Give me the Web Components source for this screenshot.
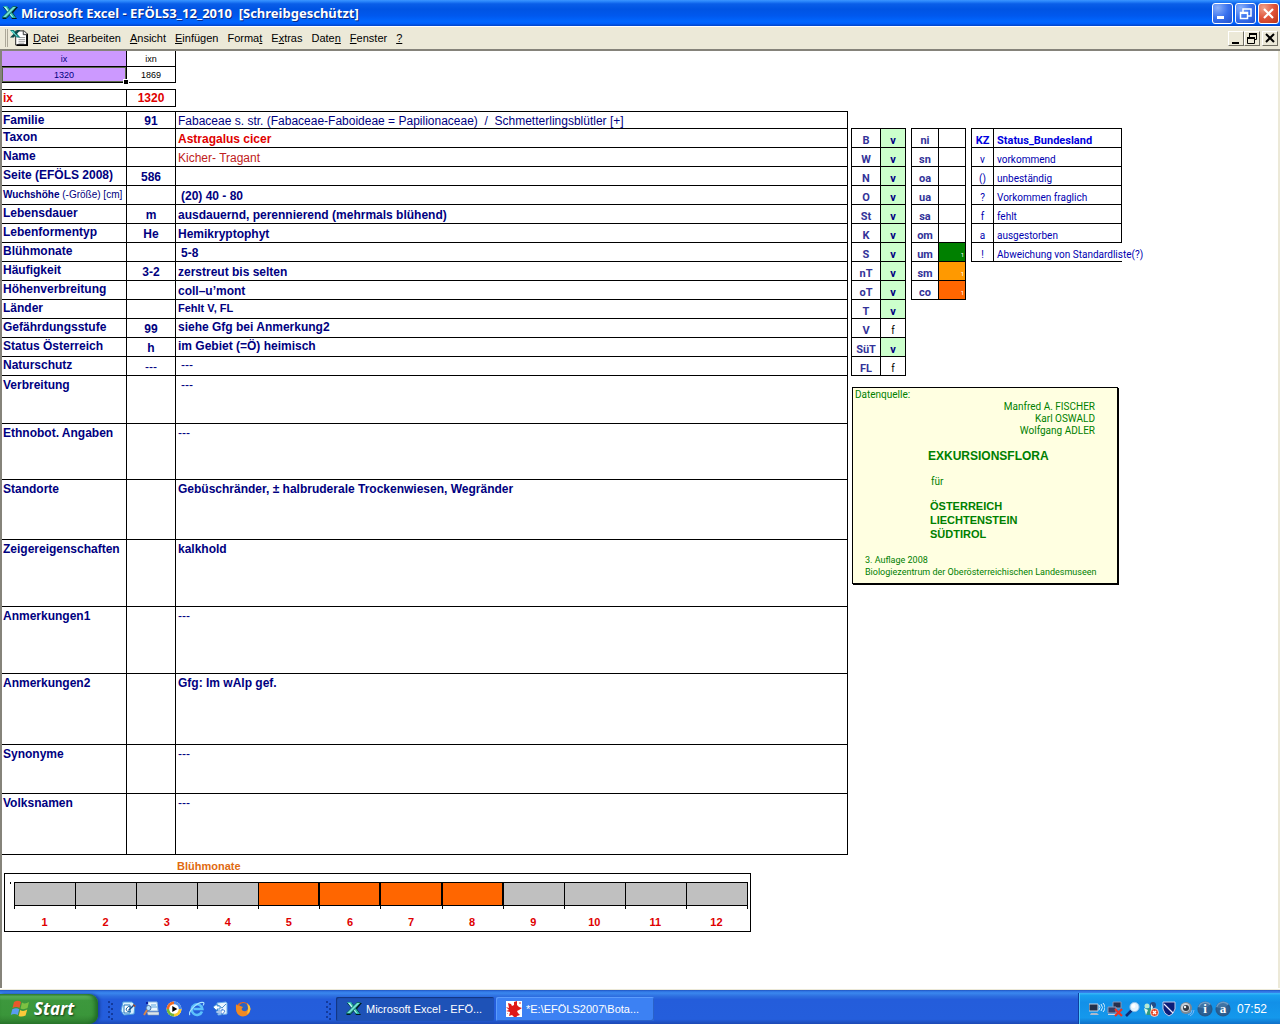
<!DOCTYPE html>
<html lang="de">
<head>
<meta charset="utf-8">
<title>Microsoft Excel - EFÖLS3_12_2010 [Schreibgeschützt]</title>
<style>
html, body { margin: 0; height: 100%; background: #fff; }
body { font: 11px/14px "Liberation Sans", Arial, sans-serif; color: #000; }
</style>
</head>
<body>
<excel-window>
  <title-bar slot="title">Microsoft Excel - EFÖLS3_12_2010&nbsp; [Schreibgeschützt]</title-bar>
  <menu-bar slot="menu"></menu-bar>
  <index-cells slot="main"></index-cells>
  <record-table slot="main"></record-table>
  <month-chart slot="main" from="5" to="8">Blühmonate</month-chart>
  <region-tables slot="side"></region-tables>
  <source-note slot="side"></source-note>
  <task-bar slot="taskbar"></task-bar>
</excel-window>

<script>
const define = (tag, html) => customElements.define(tag, class extends HTMLElement {
  connectedCallback() {
    if (this.shadowRoot) return;
    const t = document.createElement('template');
    t.innerHTML = typeof html === 'function' ? html(this) : html;
    this.attachShadow({ mode: 'open' }).append(t.content.cloneNode(true));
  }
});

const svg = (body, w = 16, h = 16, vb = `0 0 ${w} ${h}`) =>
  `<svg width="${w}" height="${h}" viewBox="${vb}" aria-hidden="true">${body}</svg>`;

const icons = {
  excel: `<path d="M1 2h5l3 4 3-4h4l-5 6 4 6h-5L8 10l-4 4H0l6-6z" fill="#021c20"/><path d="M1 1h4l9 12h-4z" fill="#27b5a8"/><path d="M2 2h2l7 10h-1z" fill="#bff7ee"/><path d="M11 1h4L5 13H0v-1z" fill="#0d6b67"/><path d="M11 2h3L4 12H1z" fill="#6fe0d2"/>`,
  sheet: `<path d="M6 2h9l3 3v12H6z" fill="#fff" stroke="#222"/><path d="M18 5v12H7" stroke="#000" fill="none" stroke-width="2"/><path d="M14 2v4h4" fill="#ddd" stroke="#333"/><path d="M9 9h7M9 11h7M9 13h7M9 15h6" stroke="#999"/><path d="M0 1h4l7 8H7z" fill="#12807a"/><path d="M8 1h3L4 9H0z" fill="#0a4a4a"/><path d="M1 2h2l5 6H7z" fill="#6ee8dc"/>`,
  flag: `<path d="M3 3q4-2.500 7 0L8.500 9q-3-2-7 0z" fill="#e8582c"/><path d="M11 3.500q3 2 7-.5L16.500 9q-4 2-7 .5z" fill="#7cc142"/><path d="M1.300 10.200q4-2 7 0L6.800 16q-3.500-2-7 0z" fill="#5a9cf0"/><path d="M9.200 11q3 2 7-.5l-1.600 6q-4 2-7 .4z" fill="#fbc93a"/>`,
  desktop: `<path d="M3 1h9l3 3-1 9-10 1-3-4z" fill="#d9f1ff" stroke="#4b9ddc"/><path d="M4 4h6v8H4z" fill="#fff" stroke="#2379bd"/><path d="M6 8q2-4 5-2M6 8q1 4 5 2" stroke="#1667a8" fill="none"/><path d="M8 9l6-6 1 1-6 6z" fill="#1a4c8a"/><path d="M13 3l3 2-2 1z" fill="#b5431c"/>`,
  find: `<path d="M5 1h9l1 9H5z" fill="#eef8ff" stroke="#8fb9dd"/><path d="M8 4h5M8 6h6" stroke="#58a3df"/><path d="M4 11h12v3H5z" fill="#dbe4ec" stroke="#8097b0" stroke-width=".6"/><circle cx="5.500" cy="7" r="2.500" fill="#b5e1ff" stroke="#4972aa"/><path d="M4 9l-3 5" stroke="#d3834b" stroke-width="2"/><path d="M3 1h2v2H3z" fill="#0a1fa0"/>`,
  media: `<circle cx="8" cy="8" r="7.500" fill="#f7f7f7"/><path d="M8 .5A7.500 7.500 0 0 0 .5 8H8z" fill="#f06a22"/><path d="M8 .5A7.500 7.500 0 0 1 15.500 8H8z" fill="#4f8de8"/><path d="M.5 8A7.500 7.500 0 0 0 8 15.500V8z" fill="#74b838"/><path d="M15.500 8A7.500 7.500 0 0 1 8 15.500V8z" fill="#fac92c"/><circle cx="8" cy="8" r="4.800" fill="#fff"/><path d="M6.300 5v6l5-3z" fill="#000"/>`,
  ie: `<path d="M13 10.500A5.300 5.300 0 1 1 13.300 8H4.500" fill="none" stroke="#5cc0fb" stroke-width="2.600"/><path d="M1 14C-2 11 9 0 14.500 1.500q1 1-.5 3" fill="none" stroke="#a8e2ff" stroke-width="1.200"/>`,
  mail: `<path d="M5 2l9-1 1 1v11l-9 1z" fill="#eaf6ff" stroke="#6caee6"/><path d="M6 4l4 3 4-4" stroke="#4f92d0" fill="none"/><path d="M1 6l4-3v2h3v3H5v2z" fill="#fff" stroke="#2a7dd0" stroke-width=".8"/><path d="M13 10l-3 4v-2H4v-2h6V8z" fill="#fff" stroke="#2a6fd0" stroke-width=".8"/>`,
  firefox: `<circle cx="8" cy="8" r="7" fill="#e8641b"/><circle cx="8.500" cy="6.500" r="4.500" fill="#2b62c4"/><path d="M1 3q1 2 3 1.500L8 6 6.500 8q1 3 4.500 2 3-1 2-5 2 1 2.500 3-.5 7-7.500 7.500Q0 15 1 3z" fill="#f08a24"/><path d="M12 2q3 2 3.500 6-1 4-3.500 5 2-5 0-11z" fill="#fbc63c"/>`,
  splat: `<path d="M0 0h16v16H0z" fill="#fff"/><path d="M2 2l3 1 1 2 2-1V1l3-1v4l2 2 3 1-3 2-2 1 1 2 2 2-3 1-1 2-2-1-2-2-3 1 1-4-4-1 3-1-3-3 3 1z" fill="#e01818"/><path d="M13 1h2v2h-2zM1 12h1v1H1z" fill="#ef9a9a"/>`,
  net: `<path d="M0 3h9v7H0z" fill="#23304a" stroke="#c4d2e4"/><path d="M2 12h6l2 2H1z" fill="#aeb9cb"/><path d="M10 4q2 2 0 5M12 3q3 3.500 0 7M14 2q4 4.500 0 9" fill="none" stroke="#d4eeff"/>`,
  netx: `<path d="M6 1h8v6H6z" fill="#25304f" stroke="#8393b5"/><path d="M1 6h8v6H1z" fill="#33406a" stroke="#8c9bbd"/><path d="M1 13h8v1H1z" fill="#cbd4e4"/><path d="M8 8l7 7M15 8l-7 7" stroke="#ea3323" stroke-width="2.200"/>`,
  lens: `<path d="M7 9l-6 6" stroke="#0c2c78" stroke-width="2.600"/><circle cx="9.500" cy="6" r="4.600" fill="#e4f4ff" stroke="#8fc1ea"/><circle cx="8.500" cy="5" r="2" fill="#fff"/>`,
  users: `<circle cx="10" cy="4" r="3" fill="#234d88"/><circle cx="4" cy="5" r="2.500" fill="#b8e9d2"/><path d="M1 8l6-1 6 1-2 6H3z" fill="#2f9a82"/><path d="M1 7l4 2-2 5zM8 3l2 3-2 6z" fill="#dff8ee"/><circle cx="11.500" cy="11.500" r="4" fill="#e4482a" stroke="#fff" stroke-width=".7"/><path d="M10 10l3 3M13 10l-3 3" stroke="#fff" stroke-width="1.400"/>`,
  shield: `<path d="M2 1h12v7q-1 5-6 7-5-2-6-7z" fill="#0b1d78" stroke="#c3cbe8"/><path d="M3 3l9 9" stroke="#eef" stroke-width="1.200"/>`,
  sound: `<circle cx="7" cy="7" r="6" fill="#7c8894"/><circle cx="6.500" cy="6.500" r="4.500" fill="#c8d0d8"/><circle cx="7" cy="7" r="3" fill="#313a44"/><circle cx="6" cy="6" r="1.200" fill="#f2f5f8"/><path d="M9 14q4-1 4-5M11 15q4-2 4-6" fill="none" stroke="#7db9f5"/>`,
  disc: `<circle cx="8" cy="8" r="7.600" fill="#275a8c"/><path d="M1 6A7.600 7.600 0 0 1 14 3L8 8z" fill="#6d9cc4"/><circle cx="8" cy="8" r="6" fill="#2f6496" opacity=".7"/>`
};

define('excel-window', `
<style>
:host { display: flex; flex-direction: column; min-height: 100vh; background: #fff; }
.sheet { flex: 1; display: grid; grid-template-columns: minmax(0, 1fr) 427px; column-gap: 3px; box-sizing: border-box;
  border-left: 2px solid #85837a; border-right: 2px solid #ece9d8; }
.side { display: flex; flex-direction: column; gap: 11px; padding-top: 77px; }
.edge { height: 2px; background: #ece9d8; border-top: 1px solid #fff; box-sizing: border-box; }
</style>
<slot name="title"></slot>
<slot name="menu"></slot>
<main class="sheet">
  <div class="main"><slot name="main"></slot></div>
  <div class="side"><slot name="side"></slot></div>
</main>
<div class="edge"></div>
<slot name="taskbar"></slot>`);

define('title-bar', `
<style>
:host { display: flex; align-items: center; gap: 3px; height: 26px; padding: 0 1px 0 2px; color: #fff;
  font: bold 13px/18px "Noto Sans", sans-serif; text-shadow: 1px 1px 0 #0a2a88;
  background: linear-gradient(#3d95ff 0, #2a86fb 5%, #0a5ee8 15%, #0054e3 35%, #0058ee 60%, #0066ff 82%, #0060fc 90%, #0144c8 100%); }
h1 { flex: 1; margin: 0; font: inherit; white-space: pre; }
.btns { display: flex; gap: 2px; }
button { width: 21px; height: 21px; padding: 0; border: 1px solid #fff; border-radius: 3px; display: grid; place-items: center;
  background: radial-gradient(circle at 25% 20%, #8bb0fa, #3a72ee 50%, #2050cc); }
button.close { background: radial-gradient(circle at 25% 20%, #f0a088, #e0533a 50%, #b83418); }
svg { display: block; }
</style>
${svg(icons.excel)}
<h1><slot></slot></h1>
<div class="btns">
<button aria-label="Minimieren">${svg('<path d="M3 11h7v3H3z" fill="#fff"/>', 17, 17)}</button>
<button aria-label="Wiederherstellen">${svg('<path d="M6 7V4h8v7h-3" fill="none" stroke="#fff" stroke-width="1.500"/><path d="M3.500 7.500h7v6h-7z" fill="none" stroke="#fff" stroke-width="1.500"/><path d="M3 7h8v2H3z" fill="#fff"/>', 17, 17)}</button>
<button class="close" aria-label="Schließen">${svg('<path d="M4 4l9 9M13 4l-9 9" stroke="#fff" stroke-width="2.200"/>', 17, 17)}</button>
</div>`);

define('menu-bar', () => {
  const items = ['<u>D</u>atei', '<u>B</u>earbeiten', '<u>A</u>nsicht', '<u>E</u>infügen', 'Forma<u>t</u>', 'E<u>x</u>tras', 'Date<u>n</u>', '<u>F</u>enster', '<u>?</u>'];
  return `
<style>
:host { display: flex; align-items: center; height: 25px; box-sizing: border-box; padding: 0 2px 0 5px;
  background: #ece9d8; border-top: 1px solid #fff; border-bottom: 2px solid #85837a; }
.grip { width: 1px; height: 18px; border-left: 1px solid #aca899; border-right: 1px solid #aca899; margin-right: 2px; }
nav { flex: 1; display: flex; gap: 9px; margin-left: 5px; }
button { font: 11px/14px "Liberation Sans", Arial, sans-serif; color: #000; padding: 0; border: 0; background: none; }
.ctl { display: flex; }
.ctl button { width: 16px; height: 15px; border: 1px solid; border-color: #fff #716f64 #716f64 #fff; background: #ece9d8; }
.ctl button:last-child { margin-left: 2px; }
svg { display: block; }
</style>
<span class="grip"></span>${svg(icons.sheet, 18, 18, '0 0 19 19')}
<nav>${items.map(i => `<button>${i}</button>`).join('')}</nav>
<div class="ctl">
<button aria-label="Fenster minimieren">${svg('<path d="M3 10h7v2H3z"/>', 14, 13)}</button>
<button aria-label="Fenster wiederherstellen">${svg('<path d="M4.500 5V2.500h7v5H9M2.500 6.500h7v5h-7z" fill="none" stroke="#000"/><path d="M4 1h8v2H4zM2 5h8v2H2z"/>', 14, 13)}</button>
<button aria-label="Fenster schließen">${svg('<path d="M3 2l8 8M11 2l-8 8" stroke="#000" stroke-width="2"/>', 14, 13)}</button>
</div>`;
});

define('index-cells', `
<style>
:host { display: block; }
table { border-collapse: separate; border-spacing: 0; width: 174px; table-layout: fixed; }
th, td { box-sizing: border-box; padding: 0; border: solid #000; border-width: 0 1px 1px 0; text-align: center; }
.c { width: 125px; }
.keys { font: 9px/14px "Liberation Sans", Arial, sans-serif; }
.keys th { font-weight: normal; }
.keys tr { height: 16px; }
.keys .k { background: #c9f; color: #000080; }
.keys td.k { position: relative; box-shadow: inset 0 0 0 1px #5c6a4c; }
.keys td.k::after { content: ""; position: absolute; right: -3px; bottom: -3px; width: 4px; height: 4px; background: #000; border: 1px solid #fff; }
.id { margin-top: 6px; border-top: 1px solid #000; color: #e00000; font: bold 12px/16px "Liberation Sans", Arial, sans-serif; }
.id th { text-align: left; padding-left: 1px; height: 17px; }
</style>
<table class="keys">
<tr><th class="c k">ix</th><th>ixn</th></tr>
<tr><td class="k">1320</td><td>1869</td></tr>
</table>
<table class="id"><tr><th class="c">ix</th><td>1320</td></tr></table>`);

define('record-table', () => {
  // label, code, value, row height, classes of the value cell
  const rows = [
    ['Familie', '91', 'Fabaceae s. str. (Fabaceae-Faboideae = Papilionaceae)&nbsp; /&nbsp; Schmetterlingsblütler [+]', 17, 'plain'],
    ['Taxon', '', 'Astragalus cicer', 19, 'taxon'],
    ['Name', '', 'Kicher- Tragant', 19, 'name'],
    ['Seite (EFÖLS 2008)', '586', '', 19, ''],
    ['<small><b>Wuchshöhe</b> (-Größe) [cm]</small>', '', '(20) 40 - 80', 19, 'indent'],
    ['Lebensdauer', 'm', 'ausdauernd, perennierend (mehrmals blühend)', 19, ''],
    ['Lebenformentyp', 'He', 'Hemikryptophyt', 19, ''],
    ['Blühmonate', '', '5-8', 19, 'indent'],
    ['Häufigkeit', '3-2', 'zerstreut bis selten', 19, ''],
    ['Höhenverbreitung', '', 'coll–u’mont', 19, ''],
    ['Länder', '', 'Fehlt V, FL', 19, 'up small'],
    ['Gefährdungsstufe', '99', 'siehe Gfg bei Anmerkung2', 19, 'up'],
    ['Status Österreich', 'h', 'im Gebiet (=Ö) heimisch', 19, 'up'],
    ['Naturschutz', '---', '---', 19, 'indent up'],
    ['Verbreitung', '', '---', 48, 'indent mid'],
    ['Ethnobot. Angaben', '', '---', 56, 'mid'],
    ['Standorte', '', 'Gebüschränder, ± halbruderale Trockenwiesen, Wegränder', 60, 'mid'],
    ['Zeigereigenschaften', '', 'kalkhold', 67, 'mid'],
    ['Anmerkungen1', '', '---', 67, 'mid'],
    ['Anmerkungen2', '', 'Gfg: Im wAlp gef.', 71, 'mid'],
    ['Synonyme', '', '---', 49, 'mid'],
    ['Volksnamen', '', '---', 61, 'mid']
  ];
  const dash = v => v === '---' ? ' plain' : '';
  return `
<style>
:host { display: block; margin-top: 4px; color: #000080; }
table { width: 100%; border-collapse: separate; border-spacing: 0; table-layout: fixed; border-top: 1px solid #000;
  font: bold 12px/15px "Liberation Sans", Arial, sans-serif; }
th, td { box-sizing: border-box; padding: 3px 0 0 2px; border: solid #000; border-width: 0 1px 1px 0; vertical-align: top; text-align: left; white-space: nowrap; }
th { padding: 1px 0 0 1px; width: 125px; }
.code { width: 49px; text-align: center; padding-left: 0; }
.up { padding-top: 1px; }
tr:first-child td { padding-top: 2px; line-height: 14px; }
tr.tall th, .mid { padding-top: 2px; }
.indent { padding-left: 5px; }
.plain, .name { font-weight: normal; }
.taxon { color: #e00000; }
.name { color: #c02020; }
.small { font-size: 11px; }
small { font: 10px/15px "Liberation Sans", Arial, sans-serif; }
</style>
<table>${rows.map(([l, c, v, h, k]) =>
    `<tr style="height:${h}px"${h > 19 ? ' class="tall"' : ''}><th scope="row">${l}</th><td class="code${dash(c)}">${c}</td><td class="${k}${dash(v)}">${v}</td></tr>`).join('')}</table>`;
});

define('month-chart', el => {
  const from = +el.getAttribute('from'), to = +el.getAttribute('to');
  const months = Array.from({ length: 12 }, (_, i) => i + 1);
  return `
<style>
:host { display: block; margin: 4px 97px 0 2px; font: bold 11px/14px "Liberation Sans", Arial, sans-serif; }
h2 { margin: 0 0 0 173px; font: inherit; color: #e06a10; }
.box { display: flex; border: 1px solid #000; height: 59px; padding: 8px 2px 0 5px; box-sizing: border-box; }
.axis { width: 4px; height: 22px; box-sizing: border-box; border-left: 1px solid transparent; border-image: linear-gradient(#000 3px, transparent 3px) 1; }
ol { flex: 1; list-style: none; margin: 0; padding: 0; display: grid; grid-template-columns: repeat(12, 1fr); border-right: 1px solid #000; height: 27px; }
li { color: #e00000; text-align: center; }
s { display: block; height: 27px; border-left: 1px solid #000; }
i { display: block; height: 22px; background: #c0c0c0; border: solid #000; border-width: 1px 0; }
.on i { background: #f60; border-right-width: 1px; }
b { display: block; padding-top: 6px; }
</style>
<h2><slot></slot></h2>
<div class="box"><span class="axis"></span><ol>${months.map(m => `<li class="${m >= from && m <= to ? 'on' : ''}"><s><i></i></s><b>${m}</b></li>`).join('')}</ol></div>`;
});

define('region-tables', () => {
  const laender = ['B', 'W', 'N', 'O', 'St', 'K', 'S', 'nT', 'oT', 'T', 'V', 'SüT', 'FL'];
  const stufen = [['ni'], ['sn'], ['oa'], ['ua'], ['sa'], ['om'], ['um', '#008000'], ['sm', '#ff9900'], ['co', '#ff6600']];
  const legend = [['v', 'vorkommend'], ['()', 'unbeständig'], ['?', 'Vorkommen fraglich'], ['f', 'fehlt'], ['a', 'ausgestorben'], ['!', 'Abweichung von Standardliste(?)']];
  return `
<style>
:host { display: flex; align-items: flex-start; gap: 5px; font: 10px/13px Roboto, "Liberation Sans", sans-serif; color: #0000b0; }
table { border-collapse: separate; border-spacing: 0; table-layout: fixed; border: solid #000; border-width: 1px 0 0 1px; }
th, td { box-sizing: border-box; height: 19px; padding: 5px 0 0; border: solid #000; border-width: 0 1px 1px 0; text-align: center; white-space: nowrap; }
th, .v { font: bold 11px/13px Roboto, "Liberation Sans", sans-serif; }
.land { width: 55px; } .stufe { width: 55px; } .legend { width: 151px; }
.land th, .stufe th { color: #333399; }
.land th { width: 29px; } .stufe th { width: 27px; }
.v { background: #cfc; color: #000080; }
.f { color: #000; }
.legend th:first-child { width: 22px; }
.legend thead { color: #0000e0; }
.legend th + th, .legend td + td { text-align: left; padding-left: 3px; }
.legend tbody tr:last-child td + td { border-right: 0; }
.mark { text-align: right; color: #fff; font-size: 6px; padding-right: 1px; }
</style>
<table class="land">${laender.map(l => {
    const s = l === 'V' || l === 'FL' ? 'f' : 'v';
    return `<tr><th scope="row">${l}</th><td class="${s}">${s}</td></tr>`;
  }).join('')}</table>
<table class="stufe">${stufen.map(([s, c]) => `<tr><th scope="row">${s}</th><td class="mark"${c ? ` style="background:${c}"` : ''}>${c ? '1' : ''}</td></tr>`).join('')}</table>
<table class="legend"><thead><tr><th>KZ</th><th>Status_Bundesland</th></tr></thead>
<tbody>${legend.map(([k, t]) => `<tr><td>${k}</td><td>${t}</td></tr>`).join('')}</tbody></table>`;
});

define('source-note', `
<style>
:host { display: flex; flex-direction: column; box-sizing: border-box; width: 266px; height: 197px; margin-left: 1px; padding: 1px 2px 5px; color: #008000;
  background: #ffffe1; border: 1px solid #000; box-shadow: 1px 1px 0 #000; font: 10px/12px Roboto, "Liberation Sans", sans-serif; white-space: nowrap; }
p { margin: 0; }
.authors { text-align: right; padding-right: 20px; }
h2 { margin: 11px 0 0 73px; font: bold 12px/16px "Liberation Sans", Arial, sans-serif; }
.for { margin: 12px 0 0 76px; }
h3 { margin: 11px 0 0 75px; font: bold 11px/14px "Liberation Sans", Arial, sans-serif; }
.foot { margin: auto 0 0 10px; font-size: 9px; }
</style>
<p>Datenquelle:</p>
<p class="authors">Manfred A. FISCHER<br>Karl OSWALD<br>Wolfgang ADLER</p>
<h2>EXKURSIONSFLORA</h2>
<p class="for">für</p>
<h3>ÖSTERREICH<br>LIECHTENSTEIN<br>SÜDTIROL</h3>
<p class="foot">3. Auflage 2008<br>Biologiezentrum der Oberösterreichischen Landesmuseen</p>`);

define('task-bar', () => {
  const quick = [['desktop', 'Desktop anzeigen'], ['find', 'Suchen'], ['media', 'Media Player'], ['ie', 'Internet Explorer'], ['mail', 'Outlook Express'], ['firefox', 'Firefox']];
  const disc = ch => `<span class="disc">${svg(icons.disc)}<em>${ch}</em></span>`;
  return `
<style>
:host { display: flex; height: 34px; color: #fff; font: 11px/14px "Liberation Sans", Arial, sans-serif;
  background: linear-gradient(#1f50b8 0, #2c6fe0 3%, #3a87ee 9%, #2e6fe0 18%, #245ddb 28%, #245edc 86%, #1c49b4 100%); }
button { font: inherit; color: inherit; border: 0; padding: 0; background: none; display: flex; align-items: center; }
svg { display: block; flex: none; }
.start { align-self: flex-end; width: 98px; height: 30px; padding-left: 10px; gap: 4px; border-radius: 0 9px 9px 0;
  background: linear-gradient(#3c8a3c 0, #5cb25c 8%, #3d983d 22%, #3a963a 70%, #2f7d2f 100%);
  box-shadow: inset -3px 0 4px #1f6a24, 2px 0 3px #173fa0; font: italic bold 17px/20px "Noto Sans", sans-serif; text-shadow: 1px 1px 2px #143c14; }
.grip { width: 6px; height: 20px; align-self: center; margin-top: 5px;
  background: radial-gradient(circle at 2px 2px, #133a9c 1px, transparent 1px) 0 0/6px 5px, radial-gradient(circle at 5px 4px, #133a9c 1px, transparent 1px) 0 0/6px 5px; }
.first { margin-left: 9px; }
.quick { display: flex; align-items: center; gap: 7px; padding: 0 0 0 7px; width: 212px; box-sizing: border-box; }
.quick, .tray { padding-top: 3px; }
.tasks { flex: 1; display: flex; align-items: flex-end; gap: 2px; padding: 0 0 3px 5px; min-width: 0; }
.tasks button { width: 158px; height: 24px; padding-left: 10px; gap: 4px; border-radius: 2px; background: #3c81f3; box-shadow: inset 1px 1px 0 #5c9cfc, inset -1px -1px 0 #2a62c8; }
.tasks button.active { background: #1e52b7; box-shadow: inset 1px 1px 1px #12357e; }
.tray { align-self: stretch; margin-top: 3px; display: flex; align-items: center; gap: 2px; padding: 1px 13px 0 10px;
  background: linear-gradient(#3ab8f8 0, #18a0f0 8%, #1290e8 30%, #1498ec 80%, #1070c8 100%); border-left: 1px solid #0e3fa0; box-shadow: inset 1px 0 0 #4cc8ff; }
.disc { position: relative; width: 16px; height: 16px; }
.disc em { position: absolute; inset: 0; text-align: center; font: bold 13px/15px "Liberation Serif", serif; }
time { margin-left: 4px; font-size: 12px; }
</style>
<button class="start">${svg(icons.flag, 20, 20, '-1 0 20 20')}Start</button>
<span class="grip first"></span>
<div class="quick">${quick.map(([i, l]) => `<button aria-label="${l}">${svg(icons[i])}</button>`).join('')}</div>
<span class="grip"></span>
<div class="tasks"><button class="active">${svg(icons.excel)}Microsoft Excel - EFÖ...</button><button>${svg(icons.splat)}*E:\\EFÖLS2007\\Bota...</button></div>
<div class="tray">${['net', 'netx', 'lens', 'users', 'shield', 'sound'].map(i => svg(icons[i])).join('')}${disc('i')}${disc('a')}<time>07:52</time></div>`;
});
</script>
</body>
</html>
